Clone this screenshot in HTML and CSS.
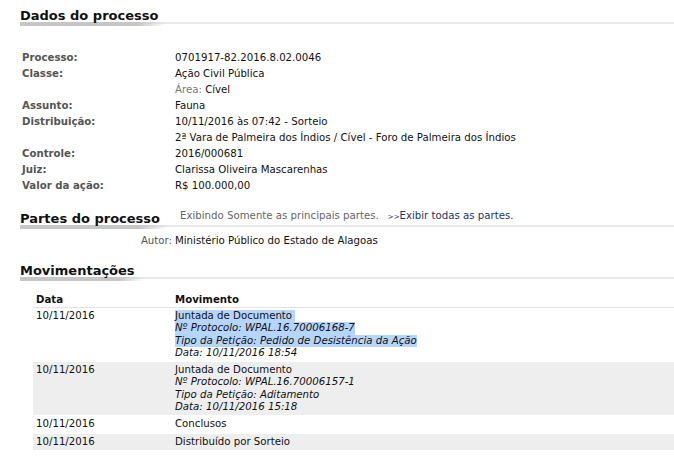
FILE: index.html
```html
<!DOCTYPE html>
<html lang="pt-BR">
  <head>
    <meta charset="UTF-8" />
    <title>Dados do processo</title>
    <link rel="stylesheet" href="styles.css">
  </head>
  <body>
    <h2 class="subtitle"><span class="subtitle-text">Dados do processo</span></h2>
    <table class="details">
      <tbody>
        <tr><td class="label">Processo:</td><td>0701917-82.2016.8.02.0046</td></tr>
        <tr><td class="label">Classe:</td><td>Ação Civil Pública</td></tr>
        <tr><td></td><td><span class="muted">Área:</span> Cível</td></tr>
        <tr><td class="label">Assunto:</td><td>Fauna</td></tr>
        <tr><td class="label">Distribuição:</td><td>10/11/2016 às 07:42 - Sorteio</td></tr>
        <tr><td></td><td>2ª Vara de Palmeira dos Índios / Cível - Foro de Palmeira dos Índios</td></tr>
        <tr><td class="label">Controle:</td><td>2016/000681</td></tr>
        <tr><td class="label">Juiz:</td><td>Clarissa Oliveira Mascarenhas</td></tr>
        <tr><td class="label">Valor da ação:</td><td>R$ 100.000,00</td></tr>
      </tbody>
    </table>

    <h2 class="subtitle">
      <span class="subtitle-text">Partes do processo</span>
      <span class="subtitle-note">Exibindo Somente as principais partes.</span>
      <a class="subtitle-link" href="#"><small>&gt;&gt;</small>Exibir todas as partes.</a>
    </h2>
    <table class="parts">
      <tbody>
        <tr><td class="part-label">Autor:</td><td>Ministério Público do Estado de Alagoas</td></tr>
      </tbody>
    </table>

    <h2 class="subtitle"><span class="subtitle-text">Movimentações</span></h2>
    <table class="moves">
      <thead>
        <tr><th class="col-date">Data</th><th>Movimento</th></tr>
      </thead>
      <tbody>
        <tr>
          <td>10/11/2016</td>
          <td>
            <div><span class="sel">Juntada de Documento&nbsp;</span></div>
            <div class="it"><span class="sel">Nº Protocolo: WPAL.16.70006168-7</span></div>
            <div class="it"><span class="sel">Tipo da Petição: Pedido de Desistência da Ação</span></div>
            <div class="it">Data: 10/11/2016 18:54</div>
          </td>
        </tr>
        <tr>
          <td>10/11/2016</td>
          <td>
            <div>Juntada de Documento</div>
            <div class="it">Nº Protocolo: WPAL.16.70006157-1</div>
            <div class="it">Tipo da Petição: Aditamento</div>
            <div class="it">Data: 10/11/2016 15:18</div>
          </td>
        </tr>
        <tr><td>10/11/2016</td><td>Conclusos</td></tr>
        <tr><td>10/11/2016</td><td>Distribuído por Sorteio</td></tr>
      </tbody>
    </table>
  </body>
</html>
```
FILE: styles.css
```css
body {
  margin: 0;
  padding-top: 8px;
  font-family: "DejaVu Sans", Verdana, sans-serif;
  font-size: 10.2px;
  color: #111;
  background: #fff;
}
.subtitle {
  display: flex;
  align-items: flex-end;
  margin: 0 0 0 20px;
  border-bottom: 2px solid #e8e8e8;
  font-size: 13px;
  font-weight: bold;
  color: #111;
}
.subtitle-text {
  padding: 0 8px 3px 0;
  margin-bottom: -4px;
  background: linear-gradient(to right, #c6c6c6 80%, rgba(198, 198, 198, 0)) no-repeat left bottom / 100% 4px;
}
.subtitle-note {
  margin-left: 12px;
  padding-bottom: 4px;
  font-size: 10.2px;
  font-weight: normal;
  color: #666;
}
.subtitle-link {
  margin-left: 9px;
  padding-bottom: 4px;
  font-size: 10.2px;
  font-weight: normal;
  color: #223466;
  text-decoration: none;
}
.subtitle-link small {
  font-size: 7px;
}
table {
  border-collapse: collapse;
  font-size: 10.2px;
}
td,
th {
  padding: 0;
  vertical-align: top;
  text-align: left;
}
.details {
  margin: 27px 0 15px 22px;
}
.details td {
  height: 15px;
  line-height: 12px;
  padding-top: 1px;
}
.label {
  width: 153px;
  font-weight: bold;
  color: #555;
}
.muted {
  color: #777;
}
.parts {
  margin: 8px 0 16px 0;
}
.parts td {
  line-height: 12px;
}
.part-label {
  width: 172px;
  padding-right: 3px;
  text-align: right;
  color: #555;
}
.moves {
  width: calc(100% - 33px);
  margin: 13px 0 0 33px;
}
.moves th {
  padding: 2px 3px 1px 3px;
  line-height: 12px;
  font-weight: bold;
  border-bottom: 1px solid #e3e3e3;
}
.col-date {
  width: 133px;
}
.moves td {
  padding: 2px 3px 2px 3px;
  line-height: 12.3px;
  border-bottom: 1px solid #fff;
}
.moves tbody tr:nth-child(2n) {
  background: #eeeeee;
}
.moves tbody tr:last-child {
  border-bottom: 1px solid #f0f0f0;
}
.it {
  font-style: italic;
}
.sel {
  display: inline-block;
  background: #b5d5fc;
}
```
